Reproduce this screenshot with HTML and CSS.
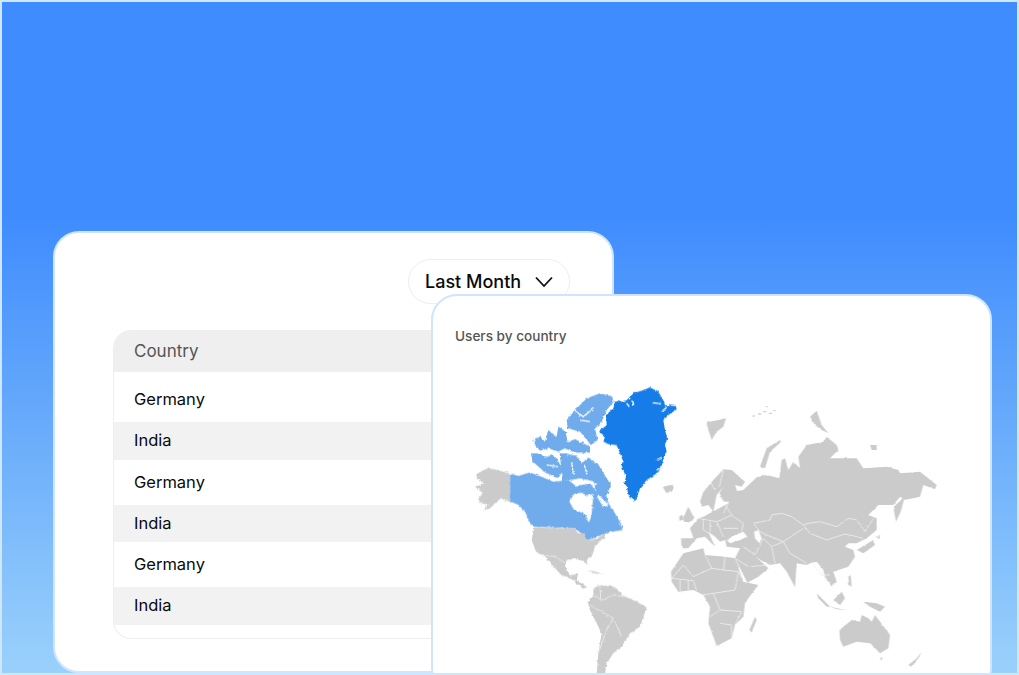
FILE: index.html
```html
<!DOCTYPE html>
<html>

<head>
  <title>Users by country</title>
  <meta charset="utf-8">
  <link rel="stylesheet" href="styles.css">
</head>

<body>
  <div class="stage">
    <div class="card card-back">
      <div class="filter">
        <button class="dropdown">
          <span>Last Month</span>
          <svg class="chevron" viewBox="0 0 18 12"><path d="M1 1.5 L9 10 L17 1.5"/></svg>
        </button>
      </div>
      <div class="table">
        <div class="row head">Country</div>
        <div class="row tall">Germany</div>
        <div class="row alt">India</div>
        <div class="row">Germany</div>
        <div class="row alt">India</div>
        <div class="row">Germany</div>
        <div class="row alt">India</div>
      </div>
    </div>

    <div class="card card-front">
      <h4 class="map-title">Users by country</h4>
      <svg class="map" viewBox="431 369 560 306">
        <defs>
          <filter id="rough" x="-5%" y="-5%" width="110%" height="110%">
            <feTurbulence type="fractalNoise" baseFrequency=".11" numOctaves="2" seed="4"/>
            <feDisplacementMap in="SourceGraphic" scale="9" xChannelSelector="R" yChannelSelector="G"/>
            <feGaussianBlur stdDeviation=".9"/>
          </filter>
          <filter id="rough-soft" x="-5%" y="-5%" width="110%" height="110%">
            <feTurbulence type="fractalNoise" baseFrequency=".08" numOctaves="2" seed="7"/>
            <feDisplacementMap in="SourceGraphic" scale="6" xChannelSelector="R" yChannelSelector="G"/>
            <feGaussianBlur stdDeviation=".9"/>
          </filter>
        </defs>
        <!-- americas, coords from a 3x crop -->
        <g transform="translate(430 370) scale(.33333)" filter="url(#rough)">
          <path class="land" d="M140 312 L175 293 L240 310 L240 393 L265 405 L240 396 L212 385 L185 410 L160 425 L172 405 L150 398 L145 385 L158 370 L137 350 L160 340 L142 325Z"/>
          <path class="canada" d="M240 310 L265 318 L300 307 L340 322 L370 335 L415 330 L440 350 L455 345 L480 340 L500 365 L530 378 L532 395 L552 425 L570 455 L578 480 L548 485 L530 490 L500 500 L470 512 L460 495 L435 475 L312 470 L300 460 L285 425 L265 405 L240 393Z"/>
          <path class="white" d="M418 395 L432 372 L452 368 L470 376 L490 372 L488 400 L484 440 L476 458 L466 432 L432 420Z"/>
          <path class="white" d="M500 378 L512 378 L535 405 L520 412Z"/>
          <g transform="translate(285 45)">
            <path class="canada" d="M125 105 L150 75 L185 40 L225 25 L262 35 L266 50 L245 75 L228 115 L210 130 L218 165 L198 180 L165 140 L128 130Z"/>
            <path class="canada" d="M25 165 L45 155 L60 170 L70 135 L95 155 L100 125 L122 140 L128 172 L150 162 L195 185 L195 203 L150 203 L120 190 L100 200 L70 190 L45 197 L30 180Z"/>
            <path class="canada" d="M18 205 L45 205 L60 218 L80 208 L98 225 L114 255 L100 280 L60 262 L40 245 L22 228Z"/>
            <path class="canada" d="M104 205 L128 205 L124 270 L110 262Z"/>
            <path class="canada" d="M130 208 L155 212 L170 235 L190 218 L218 235 L238 268 L258 300 L242 338 L215 322 L205 290 L165 280 L110 290 L115 240Z"/>
            <path class="cut" d="M150 78 L175 95 L205 70 M165 105 L195 110 M140 232 L145 268 M178 240 L186 268 M65 240 L100 245 M185 285 L215 300"/>
          </g>
          <path class="green" d="M615 393 L597 380 L590 350 L583 340 L588 320 L575 290 L578 270 L560 225 L535 222 L520 215 L525 200 L507 185 L530 165 L528 135 L550 115 L555 95 L575 95 L590 90 L610 70 L640 60 L660 52 L685 65 L700 90 L705 105 L738 108 L740 118 L715 135 L700 150 L705 180 L712 205 L705 225 L710 245 L700 265 L695 290 L680 310 L650 330 L630 355 L620 385Z"/>
          <path class="cut" d="M668 98 L695 102 M695 125 L710 112 M680 300 L700 285 M680 270 L695 262 M590 100 L598 110 M605 92 L612 104"/>
          <path class="land" d="M312 472 L432 475 L445 490 L465 490 L465 510 L500 505 L525 490 L525 500 L495 530 L485 560 L470 570 L473 585 L463 575 L440 565 L410 570 L405 590 L420 615 L445 612 L440 630 L472 652 L460 655 L430 630 L395 615 L370 590 L345 560 L318 545 L305 510Z"/>
          <path class="land" d="M470 600 L490 603 L522 613 L495 610Z"/>
          <path class="land" d="M490 655 L510 645 L550 650 L585 680 L620 695 L650 712 L630 770 L600 790 L575 830 L550 850 L530 880 L525 912 L500 912 L505 850 L515 790 L480 720 L473 695 L490 675Z"/>
          <path class="land" d="M702 350 L730 345 L728 362 L708 368Z"/>
          <path class="border" d="M345 556 L375 560 L405 578 M420 615 L440 610 M490 675 L515 690 L550 675 L585 680 M510 645 L512 690 M515 725 L550 745 L575 800 M550 745 L530 780 L505 850 M480 705 L515 725"/>
        </g>
        <!-- europe, asia, africa, australia -->
        <g transform="translate(660 390) scale(.33333)" filter="url(#rough-soft)">
          <path class="land" d="M140 97 L175 90 L198 85 L190 110 L170 125 L155 150 L145 120Z"/>
          <path class="land" d="M300 230 L320 175 L360 150 L362 157 L330 185 L315 235Z"/>
          <path class="land" d="M450 80 L470 62 L485 105 L505 130 L485 120 L465 105Z"/>
          <path class="land" d="M630 165 L650 165 L650 180 L635 180Z"/>
          <path class="dots" d="M278 78h6M295 72h8M310 65h8M328 70h8M340 62h6M318 50h5"/>
          <path class="land" d="M120 335 L130 305 L160 270 L190 238 L215 240 L255 275 L245 290 L225 285 L232 305 L240 300 L225 335 L190 335 L178 310 L190 290 L170 315 L160 365 L145 345 L125 350Z"/>
          <path class="land" d="M205 340 L222 305 L250 300 L290 262 L320 255 L358 265 L365 210 L375 205 L385 240 L400 215 L420 235 L415 200 L440 165 L490 155 L500 140 L530 165 L535 180 L510 205 L590 205 L610 235 L680 230 L715 240 L720 250 L780 245 L830 285 L825 298 L790 285 L780 320 L735 330 L720 320 L700 345 L655 345 L625 375 L650 385 L650 420 L620 445 L590 460 L565 460 L555 470 L580 480 L585 500 L565 530 L535 540 L520 545 L530 575 L515 590 L495 560 L490 540 L470 515 L450 520 L440 525 L410 520 L405 592 L380 545 L360 520 L330 525 L305 512 L285 498 L325 535 L295 560 L262 578 L225 505 L240 475 L200 470 L195 450 L180 455 L165 440 L145 425 L165 470 L135 440 L110 445 L85 475 L65 475 L63 445 L100 445 L90 415 L115 385 L130 380 L195 345Z"/>
          <path class="white" d="M200 450 L225 435 L250 425 L262 440 L240 450 L210 460Z"/>
          <path class="white" d="M282 425 L295 420 L305 445 L298 460 L285 445Z"/>
          <path class="land" d="M33 545 L70 490 L130 475 L135 495 L195 500 L225 505 L250 575 L295 585 L265 625 L255 640 L250 680 L225 705 L215 745 L170 768 L145 700 L150 650 L130 615 L100 600 L55 605 L35 575Z"/>
          <path class="land" d="M268 720 L285 680 L290 690 L275 728Z"/>
          <path class="land" d="M538 720 L575 690 L600 695 L605 675 L625 685 L635 695 L645 675 L690 735 L685 775 L660 790 L630 760 L590 755 L550 770 L540 750Z"/>
          <path class="land" d="M660 803 L668 803 L663 812Z"/>
          <path class="land" d="M745 825 L770 805 L785 785 L778 800 L755 830Z"/>
          <path class="land" d="M470 610 L510 650 L500 650 L475 625Z"/>
          <path class="land" d="M520 630 L545 605 L555 625 L540 645Z"/>
          <path class="land" d="M610 635 L650 640 L675 650 L660 665 L630 650Z"/>
          <path class="land" d="M505 648 L530 655 L560 660 L530 658Z"/>
          <path class="land" d="M565 560 L572 555 L575 590 L567 585Z"/>
          <path class="land" d="M590 480 L640 450 L645 465 L610 490Z"/>
          <path class="land" d="M648 440 L660 435 L658 448Z"/>
          <path class="land" d="M700 352 L735 318 L722 365 L708 395Z"/>
          <path class="land" d="M68 385 L85 350 L103 385 L88 397 L72 395Z"/>
          <path class="land" d="M58 378 L68 375 L68 390 L58 392Z"/>
          <path class="land" d="M8 292 L35 285 L42 293 L20 308Z"/>
          <path class="border" d="M280 400 L330 390 L335 375 L365 370 L395 380 L430 405 L445 400 L480 395 L530 410 L565 385 L590 390 L615 425 L640 385 M430 405 L450 430 L500 450 L555 432 L590 440 L610 445"/>
          <path class="border" d="M280 400 L300 425 L320 435 L370 455 L430 415 M370 455 L390 490 L440 520 M335 470 L345 520 M310 445 L335 470 L370 455 M250 470 L285 495 L310 445 M455 515 L480 555 L510 555 M475 530 L500 575"/>
          <path class="border" d="M195 345 L215 375 L250 400 L245 425 M130 380 L130 420 L165 440 M115 385 L170 395 L215 375 M150 395 L150 425 M170 395 L190 440 M190 415 L235 415 M205 340 L190 370 M190 240 L178 290 M150 275 L165 300"/>
          <path class="border" d="M135 495 L155 535 L190 540 L195 500 M70 525 L100 560 L155 535 M70 525 L35 565 L100 572 L110 602 M190 540 L235 545 L250 575 M235 545 L225 600 L160 610 L130 615 M160 610 L180 660 L150 680 M180 660 L245 665 L225 705 M180 700 L215 705 L215 745 M60 570 L60 605 M85 572 L85 605"/>
          <path class="border" d="M225 505 L265 530 L330 525"/>
        </g>
      </svg>
    </div>
  </div>
</body>

</html>
```

FILE: styles.css
```css
* {
  box-sizing: border-box;
  font-family: 'Inter', sans-serif;
}

body {
  margin: 0;
}

.stage {
  position: relative;
  height: 675px;
  overflow: hidden;
  border: 2px solid #cfe6ff;
  padding: 229px 0 0 51px;
  background: linear-gradient(180deg, #3f8cff 0%, #3f8cff 32%, #62a6fb 58%, #9ad1fb 100%);
}

.card {
  background: white;
  border: 2px solid #cfe5ff;
  border-radius: 26px;
}

.card-back {
  display: flex;
  flex-direction: column;
  width: 561px;
  height: 100%;
  padding: 26px 42px 0 58px;
}

.filter {
  display: flex;
  justify-content: flex-end;
}

.dropdown {
  display: flex;
  align-items: center;
  gap: 14px;
  width: 162px;
  height: 45px;
  padding: 0 16px;
  background: white;
  border: 1.5px solid #eeeeee;
  border-radius: 23px;
  font-size: 18px;
  font-weight: 500;
  color: #0a0a0a;
  white-space: nowrap;
}

.chevron {
  width: 18px;
  height: 12px;
  flex-shrink: 0;
  fill: none;
  stroke: #111;
  stroke-width: 1.8;
}

.table {
  width: 440px;
  height: 309px;
  margin-top: 26px;
  border: 1.5px solid #eeeeee;
  border-top: none;
  border-radius: 18px;
  overflow: hidden;
}

.row {
  display: flex;
  align-items: center;
  height: 45px;
  padding: 0 0 1px 20px;
  font-size: 16.5px;
  color: #0a0a0a;
}

.row.head {
  height: 42px;
  background: #efefef;
  font-size: 17px;
  color: #555;
}

.row.tall {
  height: 50px;
  padding-top: 5px;
}

.row.alt {
  height: 37.5px;
  background: #f2f2f2;
}

.card-front {
  position: absolute;
  top: 292px;
  left: 429px;
  width: 561px;
  height: 400px;
}

.map-title {
  margin: 32px 0 0 22px;
  font-size: 13.6px;
  font-weight: 500;
  color: #555;
}

.map {
  position: absolute;
  top: 73px;
  left: -2px;
  width: 560px;
  height: 306px;
}

.land {
  fill: #cbcbcb;
}

.canada {
  fill: #6fabec;
}

.green {
  fill: #157de8;
}

.white {
  fill: white;
}

.cut {
  fill: none;
  stroke: white;
  stroke-width: 4;
}

.border {
  fill: none;
  stroke: #f1f1f1;
  stroke-width: 2.4;
}

.dots {
  fill: none;
  stroke: #cbcbcb;
  stroke-width: 4;
}
```
